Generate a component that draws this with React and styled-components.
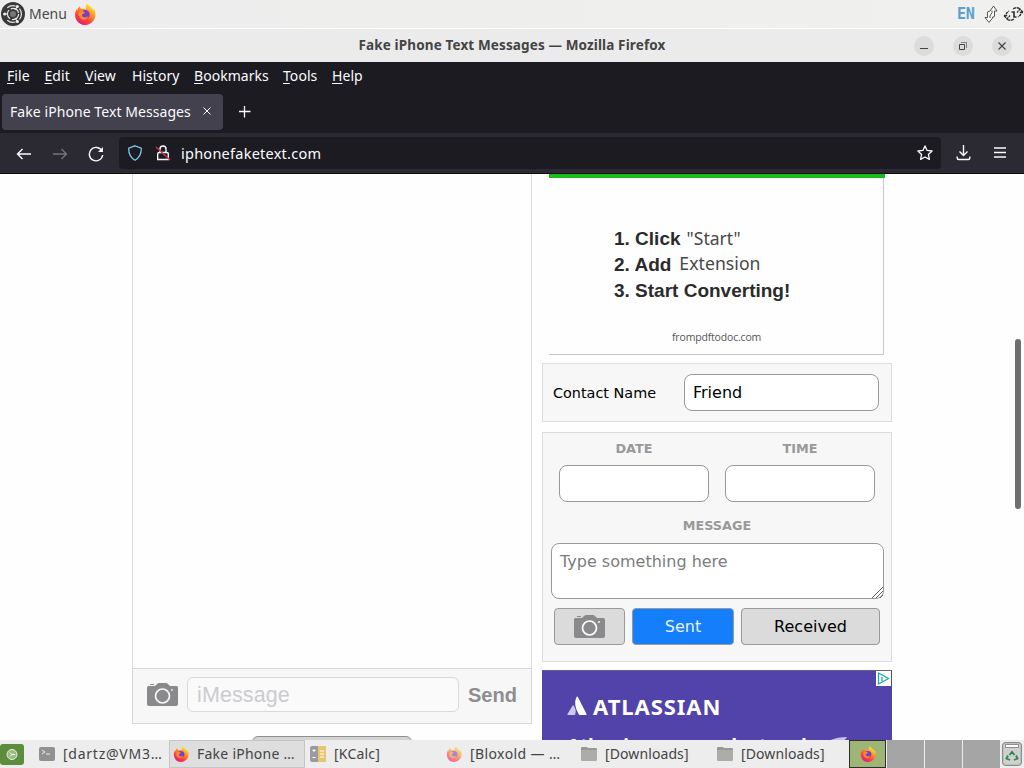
import React, { useState } from "react";
import styled, { createGlobalStyle } from "styled-components";

const GlobalStyle = createGlobalStyle`
* { box-sizing: border-box; }
body {
margin: 0;
overflow: hidden;
background: #fff;
}
svg { display: block; flex: none; }
`

const Desktop = styled.div`
width: 1024px;
height: 768px;
display: flex;
flex-direction: column;
overflow: hidden;
font-family: "Noto Sans", sans-serif;
font-size: 14px;
`

const Label = styled.span`
display: block;
flex: none;
white-space: nowrap;
line-height: 20px;
font-size: ${(p) => p.$size || 14}px;
font-weight: ${(p) => p.$weight || 400};
letter-spacing: ${(p) => p.$track || 0}px;
u { text-underline-offset: 2px; text-decoration-thickness: 1px; }
`

const TopPanel = styled.header`
display: flex;
align-items: center;
height: 28px;
padding-left: 1px;
background: linear-gradient(90deg, #ededed, #f0f0ee);
color: #4a4a4a;
`
const MenuText = styled(Label)`
margin-left: 4px;
padding-bottom: 1px;
width: 45px;
`
const Tray = styled.div`
display: flex;
align-items: center;
margin-left: auto;
gap: 5px;
`
const Lang = styled.span`
width: 22px;
font: bold 15px/20px "DejaVu Sans Mono", monospace;
letter-spacing: -0.3px;
color: #5a9fd0;
`

const TitleBar = styled.div`
display: grid;
grid-template-columns: 110px 1fr 110px;
align-items: center;
height: 34px;
border-top: 1px solid #fff;
background: #ebebeb;
color: #444;
text-align: center;
`
const WindowTitle = styled(Label)`
padding-bottom: 2px;
`
const WindowButtons = styled.div`
display: flex;
gap: 19px;
`
const RoundButton = styled.span`
display: grid;
place-items: center;
width: 20px;
height: 20px;
border-radius: 50%;
background: #dcdcdc;
`

const MenuBar = styled.nav`
display: flex;
align-items: center;
height: 29px;
padding: 0 0 2px 7px;
background: #1c1b22;
color: #fbfbfe;
`
const MenuItem = styled(Label)`
width: ${(p) => p.$width}px;
`
const TabStrip = styled.div`
display: flex;
align-items: center;
height: 42px;
padding: 0 2px 1px;
background: #1c1b22;
color: #fbfbfe;
`
const Tab = styled.div`
display: flex;
align-items: center;
justify-content: space-between;
width: 221px;
height: 36px;
padding: 0 10px 0 8px;
border-radius: 4px;
background: #42414d;
margin-right: 16px;
`
const NavBar = styled.div`
display: flex;
align-items: center;
height: 41px;
padding: 0 16px;
background: #2b2a33;
border-bottom: 1px solid #0c0c0d;
color: #fbfbfe;
`
const NavIcons = styled.div`
display: flex;
gap: 20px;
width: 103px;
padding-top: 1px;
`
const UrlBar = styled.div`
display: flex;
align-items: center;
width: 822px;
height: 32px;
padding: 0 8px;
margin-right: 15px;
border-radius: 4px;
background: #1c1b22;
`
const Address = styled(Label)`
flex: 1;
margin-left: 2px;
`

const Page = styled.main`
position: relative;
display: flex;
height: 566px;
padding-left: 132px;
overflow: hidden;
background: #fefefe;
`
const Phone = styled.section`
display: flex;
flex-direction: column;
width: 400px;
margin-right: 10px;
`
const Conversation = styled.div`
height: 494px;
flex: none;
border: solid #dcdcdc;
border-width: 0 1px;
`
const Composer = styled.div`
display: flex;
align-items: center;
height: 56px;
flex: none;
padding: 0 13px 3px 14px;
background: #f7f7f8;
border: 1px solid #d4d6d8;
`
const IMessage = styled.div`
width: 272px;
height: 35px;
margin: 0 9px 0 8px;
padding-left: 9px;
border: 1px solid #d9d9db;
border-radius: 6px;
background: #fafafb;
color: #cbcbcf;
font: 21.5px/35px "Liberation Sans", sans-serif;
letter-spacing: 0.1px;
`
const Send = styled.span`
padding-top: 1px;
font: bold 20px/24px "Liberation Sans", sans-serif;
color: #8e8e90;
`
const CutButton = styled.div`
width: 160px;
height: 36px;
flex: none;
margin: 12px 0 0 120px;
border: 1px solid #8f8f8f;
border-radius: 6px;
background: #d4d4d4;
`

const Sidebar = styled.aside`
width: 350px;
font-family: "DejaVu Sans", sans-serif;
`
const PdfAd = styled.div`
display: flex;
flex-direction: column;
width: 336px;
height: 181px;
margin: 0 0 8px 7px;
background: linear-gradient(#16be16, #16be16) top / 100% 4px no-repeat, #fefefe;
`
const PdfFrame = styled.div`
flex: 1;
width: 335px;
margin-top: 4px;
padding: 48px 0 0 65px;
border: solid #c3c8c8;
border-width: 0 1px 1px 0;
color: #2b2b2b;
`
const Step = styled.div`
display: flex;
height: 26px;
font: bold 19px/26px "Liberation Sans", sans-serif;
white-space: nowrap;
`
const StepWord = styled.span`
margin-left: ${(p) => p.$gap}px;
font: 17.6px/${(p) => p.$line}px "Noto Sans", sans-serif;
letter-spacing: ${(p) => p.$track}px;
color: #484848;
`
const PdfSite = styled.div`
margin: 26px 0 0 58px;
font: 10.5px/14px "Open Sans", sans-serif;
letter-spacing: -0.17px;
color: #555;
`

const Panel = styled.div`
border: 1px solid #dcdcdc;
background: #f7f7f7;
margin-bottom: ${(p) => p.$below}px;
`
const ContactPanel = styled(Panel)`
display: flex;
align-items: center;
justify-content: space-between;
height: 59px;
padding: 0 12px 0 10px;
font-size: 14.4px;
color: #000;
`
const Field = styled.input`
width: ${(p) => p.$width}px;
height: 37px;
padding: 0 8px;
border: 1px solid #999;
border-radius: 8px;
background: #fff;
font: 16px "DejaVu Sans", sans-serif;
color: #000;
outline: none;
`
const MessagePanel = styled(Panel)`
height: 230px;
padding: 8px 8px 0;
`
const Pair = styled.div`
display: flex;
gap: 16px;
padding-left: 8px;
`
const Caption = styled.label`
display: flex;
flex-direction: column;
align-items: center;
gap: 8px;
font-size: 12.8px;
font-weight: bold;
line-height: 16px;
color: #999;
`
const MessageCaption = styled(Caption)`
width: 332px;
margin: 16px 0 9px;
`
const MessageBox = styled.textarea`
display: block;
width: 333px;
height: 56px;
padding: 8px;
border: 1px solid #999;
border-radius: 8px;
font: 16px/19px "DejaVu Sans", sans-serif;
background: #fff;
resize: none;
outline: none;
overflow: hidden;
&::placeholder { color: #7c7c7c; }
`
const BoxWrap = styled.div`
position: relative;
width: 333px;
margin-bottom: 9px;
`
const Grip = styled.svg`
position: absolute;
right: 1px;
bottom: 1px;
`
const Actions = styled.div`
display: flex;
gap: 7px;
padding-left: 3px;
`
const ActionButton = styled.button`
display: grid;
place-items: center;
width: ${(p) => p.$width}px;
height: 37px;
padding: 0;
border: 1px solid #999;
border-radius: 4px;
background: ${(p) => (p.$blue ? "#147efb" : "#dbdbdb")};
color: ${(p) => (p.$blue ? "#e9f3ff" : "#000")};
font: 16px "DejaVu Sans", sans-serif;
`

const Atlassian = styled.div`
position: relative;
height: 90px;
padding: 23px 0 0 25px;
border-top: 1px solid #665b90;
background: #5243aa;
color: #fff;
`
const Brand = styled.div`
display: flex;
align-items: center;
gap: 6px;
height: 23px;
font: bold 22px/22px "Noto Sans", sans-serif;
letter-spacing: 0.95px;
`
const Pitch = styled.div`
display: flex;
margin-top: 17px;
white-space: nowrap;
font: bold 19px/24px "Noto Sans", sans-serif;
letter-spacing: -0.2px;
`
const Swoosh = styled.svg`
margin: 3px 0 0 20px;
`
const AdChoice = styled.svg`
position: absolute;
top: 0;
right: 1px;
`
const Scrollbar = styled.div`
position: absolute;
right: 3px;
top: 165px;
width: 6px;
height: 170px;
border-radius: 3px;
background: #6f6f72;
`

const Taskbar = styled.footer`
display: flex;
align-items: center;
height: 28px;
background: #ededed;
color: #444;
`
const Task = styled.div`
display: flex;
align-items: center;
gap: 8px;
width: 136px;
height: 28px;
padding-left: ${(p) => p.$pad || 4}px;
border: 1px solid ${(p) => (p.$active ? "#c6c6c6" : "transparent")};
background: ${(p) => (p.$active ? "#dedede" : "transparent")};
overflow: hidden;
`
const ShowDesktop = styled.div`
width: 33px;
padding-top: 1px;
`
const Pager = styled.div`
display: flex;
gap: 1px;
height: 28px;
margin-right: 2px;
`
const Workspace = styled.div`
display: grid;
place-items: center;
width: 37px;
height: 28px;
background: ${(p) => (p.$active ? "#9eb578" : "#a5a5a5")};
border: ${(p) => (p.$active ? "1px solid #2e3027" : "none")};
`

const Firefox = ({ size, faded }) => (
    <svg width={size} height={size} viewBox="0 0 24 24" opacity={faded ? 0.6 : 1}>
        <defs>
            <linearGradient id="fox" x1="0.8" y1="0.05" x2="0.25" y2="0.95">
                <stop offset="0" stopColor="#fff044" />
                <stop offset="0.35" stopColor="#ff9a22" />
                <stop offset="0.7" stopColor="#ff453d" />
                <stop offset="1" stopColor="#e5177b" />
            </linearGradient>
        </defs>
        <path fill="url(#fox)" d="M15 .5c1 3 5 4 6.500 7.500l.7-1.500c2 5 1.500 10-1.500 13.500C16 25.500 7 25.500 3 19 .5 15 .6 10.500 3 6.500l.3 2C4 6 5 4.500 6.500 3.500c0 1.500.5 2.500 1.500 3 2-.5 4-.5 5 .3C12.500 4 13 2 15 .5z" />
        <circle cx="12" cy="12.500" r="5" fill="#7541c9" />
        <path fill="#ff8b2a" d="M5 10c2-2 5-1.500 7 .3-1 1.700-3 1.200-3.400 3 .8 3.200 5 3 7 1-1 4-5.500 5-8.500 2.500C5 15 4.300 12 5 10z" />
    </svg>
)

const UbuntuMate = () => (
    <svg width="24" height="24" viewBox="0 0 24 24">
        <circle cx="12" cy="12" r="12" fill="#3a3a3a" />
        <g fill="none" stroke="#e8e8e8" strokeWidth="1.200">
            <path d="M6.300 5.800a8.400 8.400 0 0 1 8.200-1.800M18.500 6.700a8.400 8.400 0 0 1 0 10.600M14.500 20a8.400 8.400 0 0 1-8.200-1.800" />
            <circle cx="12" cy="12" r="5.600" strokeDasharray="9.700 2" />
            <path d="M3.700 12h3M14 8l2.500-3.500M14 16l2.500 3.500" />
        </g>
        <g fill="#eee">
            <circle cx="16.300" cy="4.500" r="1.600" />
            <circle cx="3.700" cy="12" r="1.600" />
            <circle cx="16.300" cy="19.500" r="1.600" />
        </g>
        <circle cx="12" cy="12" r="3" fill="#777" />
    </svg>
)

const Camera = ({ ring }) => (
    <svg width="32" height="24" viewBox="0 0 32 24">
        <path fill="#8a8a8c" d="M0 4.500q0-1.500 1.500-1.500H8l2-2Q11 0 12 0h7q1 0 2 1l2 2h6.500Q31 3 31 4.500V21q0 2-2 2H2q-2 0-2-2zM3 1h4v1H3z" />
        <circle cx="15.500" cy="13" r="7" fill="none" stroke={ring} strokeWidth="1.700" />
        <circle cx="25" cy="7" r=".9" fill={ring} />
    </svg>
)

const Terminal = () => (
    <svg width="16" height="16" viewBox="0 0 16 16">
        <rect y="1" width="16" height="14" rx="2" fill="#919191" />
        <path d="M3 4l3 2-3 2M7 8h4" stroke="#eee" fill="none" />
    </svg>
)
const Calc = () => (
    <svg width="16" height="16" viewBox="0 0 16 16">
        <rect width="16" height="16" rx="2" fill="#999ba0" />
        <path d="M8 0h6q2 0 2 2v12q0 2-2 2H8z" fill="#e8c66e" />
        <path d="M2.500 4.500h3M4 3v3M2.500 11.500h3M10 5h4M10 8h4M10 11h4" stroke="#fff" />
    </svg>
)
const Folder = () => (
    <svg width="16" height="16" viewBox="0 0 16 16">
        <path d="M0 2q0-1 1-1h5l1 1h8q1 0 1 1v10q0 2-2 2H2q-2 0-2-2z" fill="#989894" />
        <path d="M0 4h16v9q0 2-2 2H2q-2 0-2-2z" fill="#acaca8" />
    </svg>
)

const menus = [
    ["F", "ile", 37.5, ""], ["E", "dit", 40.5, ""], ["V", "iew", 47, ""], ["s", "tory", 62, "Hi"],
    ["B", "ookmarks", 89, ""], ["T", "ools", 49, ""], ["H", "elp", 40, ""],
]

const App = () => {
const [form, setForm] = useState({ contact: "Friend", date: "", time: "", message: "" })

const handleChange = (event) => {
const { name, value } = event.target
setForm({ ...form, [name]: value })
}

    return (
        <Desktop>
            <GlobalStyle />
            <TopPanel>
                <UbuntuMate />
                <MenuText $size={14} $track={0}>Menu</MenuText>
                <Firefox size={22} />
                <Tray>
                    <Lang>EN</Lang>
                    <svg width="14" height="18" viewBox="0 0 14 18" fill="#fafafa" stroke="#555" strokeWidth="1">
                        <path d="M9.500 1L13 6h-2.500v5.500L8 12.500h1L5 17.500 1 12.500h2.500V7L6 6z" />
                        <path d="M8 5.500v2L6 11v2" />
                    </svg>
                    <svg width="21" height="16" viewBox="0 0 21 16" fill="none" stroke="#333" strokeWidth="1.400">
                        <path d="M1 9.500h2.500V7L6 5M1 9.500L4 13l3-3.500M4.500 13.500q3 1.800 6.500-.5" strokeDasharray="3 .7" />
                        <path d="M20 6.500h-2.500V9L15 11M20 6.500L17 3l-3 3.500M16.500 2.500q-3-1.800-6.500.5" strokeDasharray="3 .7" />
                        <path d="M8.500 6h2.500v5h2.500" strokeWidth="1.700" />
                    </svg>
                </Tray>
            </TopPanel>
            <TitleBar>
                <span />
                <WindowTitle $weight={700} $size={13.5} $track={0.13}>Fake iPhone Text Messages — Mozilla Firefox</WindowTitle>
                <WindowButtons>
                    <RoundButton><svg width="10" height="10"><path d="M1 7.500h8" stroke="#444" /></svg></RoundButton>
                    <RoundButton><svg width="10" height="10" fill="none" stroke="#444"><path d="M1.500 3.500h5v5h-5z" /><path d="M3 1.500h5.500V7" strokeWidth=".6" /></svg></RoundButton>
                    <RoundButton><svg width="10" height="10"><path d="M1.500 1.500l7 7M8.500 1.500l-7 7" stroke="#444" strokeWidth="1.200" /></svg></RoundButton>
                </WindowButtons>
            </TitleBar>
            <MenuBar>
                {menus.map(([key, rest, width, before]) => (
                    <MenuItem key={rest} $width={width} $track={0.05}>{before}<u>{key}</u>{rest}</MenuItem>
                ))}
            </MenuBar>
            <TabStrip>
                <Tab>
                    <Label $track={0.07}>Fake iPhone Text Messages</Label>
                    <svg width="11" height="11" stroke="#fbfbfe"><path d="M1.500 1.500l7 7M8.500 1.500l-7 7" /></svg>
                </Tab>
                <svg width="12" height="12" stroke="#fbfbfe" strokeWidth="1.300"><path d="M5.500 0v11.500M0 5.500h11.500" /></svg>
            </TabStrip>
            <NavBar>
                <NavIcons>
                    <svg width="16" height="16" viewBox="0 0 16 16" fill="none" stroke="#fbfbfe" strokeWidth="1.400"><path d="M15 8H1.500M6.500 3L1.500 8l5 5" /></svg>
                    <svg width="16" height="16" viewBox="0 0 16 16" fill="none" stroke="#74737b" strokeWidth="1.300"><path d="M1 8h13.500M9.500 3l5 5-5 5" /></svg>
                    <svg width="16" height="16" viewBox="0 0 16 16" fill="none" stroke="#fbfbfe" strokeWidth="1.400"><path d="M14 5A6.700 6.700 0 1 0 14.700 9" /><path d="M15 1v5h-5z" fill="#fbfbfe" stroke="none" /></svg>
                </NavIcons>
                <UrlBar>
                    <svg width="16" height="16" viewBox="0 0 16 16" fill="none" stroke="#79c6e8" strokeWidth="1.300"><path d="M8 .8l6.300 2.300c.2 5.500-1.500 9.500-6.300 12.200C3.200 12.600 1.500 8.600 1.700 3.100z" /></svg>
                    <svg width="36" height="16" viewBox="-12 0 36 16" fill="none" stroke="#fbfbfe" strokeWidth="1.400"><path d="M5 7.500V4a3 3 0 0 1 6 0v3.500M2.700 14.500V9q0-1.500 1.500-1.500h7.600q1.500 0 1.500 1.500v5.500z" /><path d="M1 2l14 13" stroke="#e22850" /></svg>
                    <Address $size={14.5} $track={0.25}>iphonefaketext.com</Address>
                    <svg width="16" height="16" viewBox="0 0 16 16" fill="none" stroke="#fbfbfe" strokeWidth="1.300" strokeLinejoin="round"><path d="M8 .9l2.100 4.500 5 .6-3.700 3.400 1 5L8 12l-4.400 2.400 1-5L.9 6l5-.6z" /></svg>
                </UrlBar>
                <svg width="16" height="16" viewBox="0 0 16 16" fill="none" stroke="#fbfbfe" strokeWidth="1.400"><path d="M7.500 0v10.500M3.500 6.500l4 4 4-4M1.200 11.500V13q0 1.500 1.500 1.500h9.600q1.500 0 1.500-1.500v-1.500" /></svg>
                <svg width="36" height="16" viewBox="-22 0 36 16" stroke="#fbfbfe" strokeWidth="1.300"><path d="M0 3h12M0 7.500h12M0 12h12" /></svg>
            </NavBar>
            <Page>
                <Phone>
                    <Conversation />
                    <Composer>
                        <Camera ring="#f7f7f8" />
                        <IMessage>iMessage</IMessage>
                        <Send>Send</Send>
                    </Composer>
                    <CutButton />
                </Phone>
                <Sidebar>
                    <PdfAd>
                        <PdfFrame>
                            <Step>1. Click<StepWord $gap={6} $track={0} $line={24}>"Start"</StepWord></Step>
                            <Step>2. Add<StepWord $gap={8} $track={0.05} $line={22}>Extension</StepWord></Step>
                            <Step>3. Start Converting!</Step>
                            <PdfSite>frompdftodoc.com</PdfSite>
                        </PdfFrame>
                    </PdfAd>
                    <ContactPanel $below={10}>
                        Contact Name
                        <Field $width={195} name="contact" value={form.contact} onChange={handleChange} />
                    </ContactPanel>
                    <MessagePanel $below={8}>
                        <Pair>
                            <Caption>DATE<Field $width={150} name="date" value={form.date} onChange={handleChange} /></Caption>
                            <Caption>TIME<Field $width={150} name="time" value={form.time} onChange={handleChange} /></Caption>
                        </Pair>
                        <MessageCaption htmlFor="message">MESSAGE</MessageCaption>
                        <BoxWrap>
                            <MessageBox id="message" name="message" placeholder="Type something here" value={form.message} onChange={handleChange} />
                            <Grip width="11" height="11" stroke="#666"><path d="M0 11L11 0M4 11l7-7M8 11l3-3" /></Grip>
                        </BoxWrap>
                        <Actions>
                            <ActionButton $width={71}><Camera ring="#fff" /></ActionButton>
                            <ActionButton $width={102} $blue>Sent</ActionButton>
                            <ActionButton $width={139}>Received</ActionButton>
                        </Actions>
                    </MessagePanel>
                    <Atlassian>
                        <Brand>
                            <svg width="20" height="20" viewBox="0 0 20 20"><path d="M6 9q4 4 2 10H1q-1 0-.5-1z" fill="#cfc9e8" /><path d="M9.500 1q.7-1 1.400 0L19.500 18q.5 1-.5 1h-6q-1 0-1.500-1Q6 8 9.500 1z" fill="#fff" /></svg>
                            ATLASSIAN
                        </Brand>
                        <Pitch>
                            Atlassian our product and
                            <Swoosh width="22" height="8" viewBox="0 0 22 8"><path d="M0 5Q8 0 20 0l-3 4z" fill="#c9c2ea" /></Swoosh>
                        </Pitch>
                        <AdChoice width="15" height="15"><path d="M0 0h15v15H0z" fill="#fff" /><path d="M2.500 2l10 5.500-10 5.500zM6 6v4" fill="none" stroke="#1fa8b0" strokeWidth="1.300" /></AdChoice>
                    </Atlassian>
                </Sidebar>
                <Scrollbar />
            </Page>
            <Taskbar>
                <ShowDesktop>
                    <svg width="24" height="21" viewBox="0 0 24 21"><rect width="24" height="21" rx="3" fill="#5c8c3c" /><circle cx="12" cy="10.500" r="5" fill="#9abb82" stroke="#eee" /><path d="M10 8.500l2 2-2 2M12 10.500h3" stroke="#fff" fill="none" /></svg>
                </ShowDesktop>
                <Task $pad={5}><Terminal /><Label $track={0.75}>[dartz@VM3…</Label></Task>
                <Task $active $pad={3}><Firefox size={16} /><Label $track={0.25}>Fake iPhone …</Label></Task>
                <Task><Calc /><Label $track={0.2}>[KCalc]</Label></Task>
                <Task><Firefox size={16} faded /><Label $track={0.4}>[Bloxold — …</Label></Task>
                <Task $pad={3}><Folder /><Label $track={0.1}>[Downloads]</Label></Task>
                <Task $pad={3}><Folder /><Label $track={0.1}>[Downloads]</Label></Task>
                <Pager>
                    <Workspace $active><Firefox size={16} /></Workspace>
                    <Workspace /><Workspace /><Workspace />
                </Pager>
                <svg width="20" height="24" viewBox="0 0 20 24"><rect x=".7" y=".7" width="18.600" height="22.600" rx="2.500" fill="#d0d0d0" stroke="#777" /><path d="M3.500 2.500h13v3h-13z" fill="#fff" stroke="#777" strokeWidth=".8" /><path d="M7.500 13l2.500-3 2.500 3M14 13.500l1.500 3-3.500 1.500M6 13.500l-1.500 3L8 18" stroke="#2b8a4b" strokeWidth="1.900" fill="none" /></svg>
            </Taskbar>
        </Desktop>
    )
}

export default App
